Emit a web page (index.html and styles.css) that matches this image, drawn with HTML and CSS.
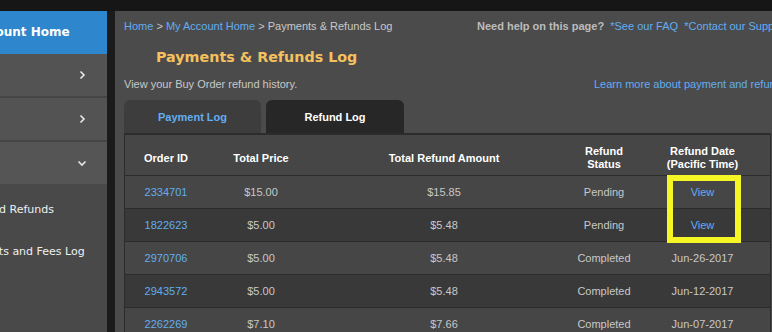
FILE: index.html
```html
<!DOCTYPE html>
<html lang="en">
<head>
    <meta charset="UTF-8">
    <title>Payments &amp; Refunds Log</title>
    <link rel="stylesheet" href="styles.css">
</head>
<body>
    <div class="topbar"></div>
    <div class="page">
        <nav class="sidebar">
            <div class="side-inner">
                <div class="side-home">My Account Home</div>
                <div class="side-item">Orders
                    <svg class="chev" width="8" height="12" viewBox="0 0 8 12"><path d="M2.5 2.5l3.5 3.5-3.5 3.5" fill="none" stroke="#e8e8e8" stroke-width="1.6"/></svg>
                </div>
                <div class="side-item">Profile
                    <svg class="chev" width="8" height="12" viewBox="0 0 8 12"><path d="M2.5 2.5l3.5 3.5-3.5 3.5" fill="none" stroke="#e8e8e8" stroke-width="1.6"/></svg>
                </div>
                <div class="side-item open">Payments
                    <svg class="chev" width="12" height="8" viewBox="0 0 12 8"><path d="M2.5 2.5l3.5 3.5 3.5-3.5" fill="none" stroke="#e8e8e8" stroke-width="1.6"/></svg>
                </div>
                <div class="side-sub">
                    <div class="sub-link">Payments and Refunds</div>
                    <div class="sub-link wide">Adjustments and Fees Log</div>
                    <div class="sub-link">Bids</div>
                    <div class="sub-link low">Withdrawal Log</div>
                </div>
            </div>
        </nav>

        <main class="main">
            <div class="top-row">
                <div class="crumbs">
                    <a href="#">Home</a> &gt; <a href="#">My Account Home</a> &gt; Payments &amp; Refunds Log
                </div>
                <div class="help">
                    <b>Need help on this page?</b>&nbsp; <a href="#">*See our FAQ</a>&nbsp; <a href="#">*Contact our Support</a>
                </div>
            </div>

            <h1 class="title">Payments &amp; Refunds Log</h1>

            <div class="intro-row">
                <div class="intro">View your Buy Order refund history.</div>
                <a class="learn" href="#">Learn more about payment and refund policies</a>
            </div>

            <div class="tabs">
                <div class="tab">Payment Log</div>
                <div class="tab active">Refund Log</div>
            </div>

            <div class="table-wrap">
                <table class="log">
                    <thead>
                        <tr>
                            <th class="c-id">Order ID</th>
                            <th class="c-price">Total Price</th>
                            <th class="c-amount">Total Refund Amount</th>
                            <th class="c-status">Refund<br>Status</th>
                            <th class="c-date">Refund Date<br>(Pacific Time)</th>
                        </tr>
                    </thead>
                    <tbody>
                        <tr>
                            <td><a href="#">2334701</a></td>
                            <td>$15.00</td>
                            <td>$15.85</td>
                            <td>Pending</td>
                            <td><a href="#">View</a></td>
                        </tr>
                        <tr>
                            <td><a href="#">1822623</a></td>
                            <td>$5.00</td>
                            <td>$5.48</td>
                            <td>Pending</td>
                            <td><a href="#">View</a></td>
                        </tr>
                        <tr>
                            <td><a href="#">2970706</a></td>
                            <td>$5.00</td>
                            <td>$5.48</td>
                            <td>Completed</td>
                            <td>Jun-26-2017</td>
                        </tr>
                        <tr>
                            <td><a href="#">2943572</a></td>
                            <td>$5.00</td>
                            <td>$5.48</td>
                            <td>Completed</td>
                            <td>Jun-12-2017</td>
                        </tr>
                        <tr>
                            <td><a href="#">2262269</a></td>
                            <td>$7.10</td>
                            <td>$7.66</td>
                            <td>Completed</td>
                            <td>Jun-07-2017</td>
                        </tr>
                    </tbody>
                </table>
                <div class="highlight"></div>
            </div>
        </main>
    </div>
</body>
</html>
```

FILE: styles.css
```css
body {
    margin: 0;
    background: #1b1b1b;
    font-family: "Liberation Sans", Arial, sans-serif;
    font-size: 11px;
    color: #c8c8c8;
    overflow: hidden;
}
a {
    color: #62adf2;
    text-decoration: none;
}
.topbar {
    height: 11px;
    background: #161616;
}
.page {
    display: flex;
    height: 321px;
}

/* sidebar */
.sidebar {
    width: 107px;
    flex: none;
    overflow: hidden;
    background: #494949;
    font-family: "DejaVu Sans", Verdana, sans-serif;
    color: #f0f0f0;
}
.side-inner {
    width: 247px;
    margin-left: -140px;
}
.side-home {
    height: 43px;
    line-height: 43px;
    background: #2e86cc;
    font-weight: bold;
    font-size: 12px;
    padding-left: 88px;
    color: #fff;
}
.side-item {
    height: 42px;
    background: #535353;
    border-bottom: 2px solid #454545;
    display: flex;
    align-items: center;
    justify-content: space-between;
    padding: 0 21px 0 40px;
    font-size: 12px;
}
.side-item.open {
    background: #555;
    border-bottom: none;
    padding-right: 19px;
}
.side-sub {
    padding-top: 5px;
}
.sub-link {
    height: 42px;
    line-height: 42px;
    padding-left: 68px;
    font-size: 11px;
    white-space: nowrap;
}
.sub-link.wide {
    padding-left: 80px;
}
.sub-link.low {
    line-height: 76px;
    padding-left: 50px;
}

/* main panel */
.main {
    flex: none;
    width: 655px;
    margin-left: 8px;
    background: #4b4b4b;
    padding: 8px 0 0 9px;
    overflow: hidden;
}
.top-row {
    display: flex;
    white-space: nowrap;
    height: 15px;
    line-height: 15px;
}
.crumbs {
    width: 353px;
    flex: none;
}
.help b {
    color: #bcbcbc;
}
.title {
    margin: 12px 0 0 32px;
    font-family: "DejaVu Sans", Verdana, sans-serif;
    font-size: 14.3px;
    font-weight: bold;
    color: #f4c15e;
    height: 23px;
    line-height: 23px;
}
.intro-row {
    display: flex;
    white-space: nowrap;
    margin-top: 8px;
    height: 15px;
    line-height: 15px;
}
.intro {
    width: 470px;
    flex: none;
}

/* tabs */
.tabs {
    display: flex;
    gap: 5px;
    margin-top: 8px;
}
.tab {
    width: 137px;
    height: 33px;
    line-height: 34px;
    text-align: center;
    font-weight: bold;
    color: #62adf2;
    background: #3d3d3d;
    border-radius: 6px 6px 0 0;
}
.tab.active {
    width: 138px;
    color: #fff;
    background: #272727;
}

/* table */
.table-wrap {
    position: relative;
    width: 645px;
}
.log {
    width: 645px;
    border-collapse: collapse;
    table-layout: fixed;
    background: #464646;
    border: 1px solid #2c2c2c;
    border-top: 2px solid #2c2c2c;
}
.log th {
    height: 34px;
    color: #fff;
    font-weight: bold;
    line-height: 13px;
    padding: 6px 0 0;
    border-bottom: 1px solid #2c2c2c;
}
.log td {
    height: 32px;
    text-align: center;
    padding: 0;
    color: #c8c8c8;
    border-bottom: 1px solid #2c2c2c;
}
.log tbody tr:nth-child(even) td {
    background: #393939;
}
.c-id { width: 82px; }
.c-price { width: 108px; }
.c-amount { width: 258px; }
.c-status { width: 62px; }
.c-date { width: 135px; }

.highlight {
    position: absolute;
    left: 543px;
    top: 42px;
    width: 62px;
    height: 56px;
    border: 6px solid #f6f525;
}
```
